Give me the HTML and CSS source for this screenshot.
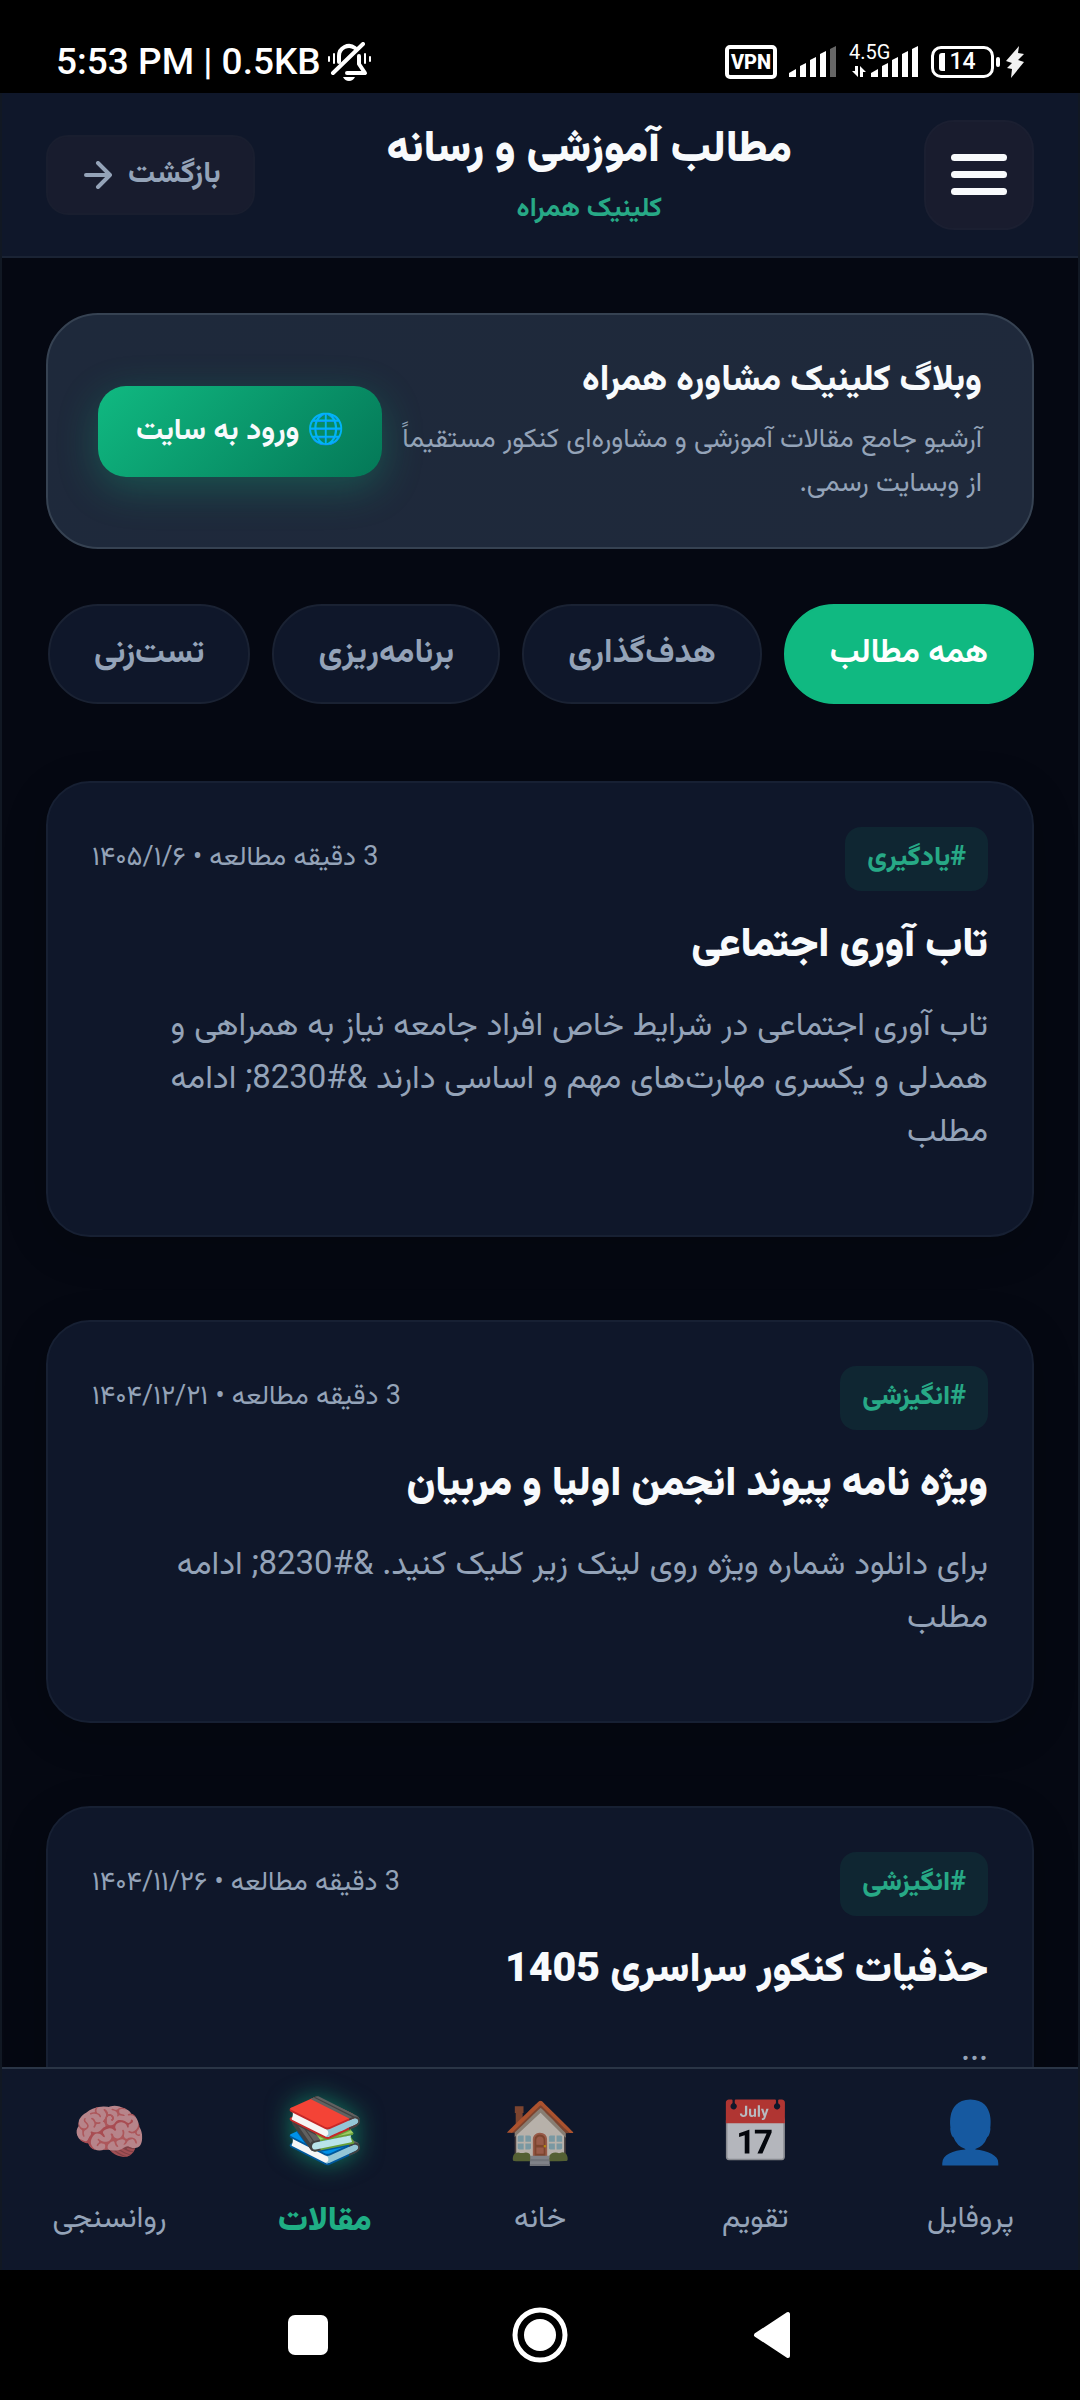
FILE: index.html
```
<!DOCTYPE html>
<html lang="fa" dir="rtl">
<head>
    <meta charset="UTF-8">
    <meta name="viewport" content="width=device-width, initial-scale=1.0">
    <title>مطالب آموزشی و رسانه</title>

    <link rel="stylesheet" href="styles.css">
</head>
<body>

    <div class="status" dir="ltr">
        <div class="status_left">
            <span class="status_time">5:53 PM | 0.5KB</span>
            <svg viewBox="0 0 44 40" width="44" height="40" fill="none" stroke="#fff" stroke-width="4" stroke-linecap="round">
                <path d="M12 20V14a10 10 0 0 1 16-8"/>
                <path d="M32 14v8l6 9H20" stroke-linejoin="round"/>
                <path d="M6 31 36 2"/>
                <path d="M2 15v4M7 12v9M38 12v9M43 15v4" stroke-width="2"/>
                <path d="M16 35h12q-2 4-6 4t-6-4z" fill="#fff" stroke="none"/>
            </svg>
        </div>
        <div class="status_right">
            <span class="vpn">VPN</span>
            <svg viewBox="0 0 48 32" width="48" height="32" fill="#fff">
                <path d="M0 31v-4l7-4v8z"/>
                <path d="M11 31V20l6-3v14z"/>
                <path d="M21 31V14l6-3v20z"/>
                <path d="M31 31V8l6-3v26z"/>
                <path d="M41 31V3l6-3v31z" fill="#666"/>
            </svg>
            <div class="cell">
                <span class="cell_label">4.5G</span>
                <svg viewBox="0 0 70 32" width="70" height="32" fill="#fff">
                    <path d="M9 20v11L3 25h3v-5zM11 31V20l6 6h-3v5z"/>
                    <path d="M22 31v-4l7-4v8z"/>
                    <path d="M33 31V20l6-3v14z"/>
                    <path d="M43 31V14l6-3v20z"/>
                    <path d="M53 31V8l6-3v26z"/>
                    <path d="M63 31V3l6-3v31z"/>
                </svg>
            </div>
            <div class="battery"><span>14</span></div>
            <svg viewBox="0 0 18 32" width="18" height="32" fill="#f1f1f1">
                <path d="M13 0 0 15l6 2-5 5 5 1-1 9L18 16l-6-2 6-6-6-1z"/>
            </svg>
        </div>
    </div>

    <div class="app">
        <header class="header">
            <button class="menu" type="button" aria-label="منو">
                <span></span>
                <span></span>
                <span></span>
            </button>
            <div class="header_title">
                <h1>مطالب آموزشی و رسانه</h1>
                <p>کلینیک همراه</p>
            </div>
            <button class="back" type="button">
                بازگشت
                <svg viewBox="0 0 28 28" width="28" height="28" fill="none" stroke="currentColor" stroke-width="4" stroke-linecap="round" stroke-linejoin="round">
                    <path d="M2 14h24M14 2l12 12-12 12"/>
                </svg>
            </button>
        </header>

        <main class="content">
            <section class="banner">
                <div class="banner_text">
                    <h2>وبلاگ کلینیک مشاوره همراه</h2>
                    <p>آرشیو جامع مقالات آموزشی و مشاوره‌ای کنکور مستقیماً از وبسایت رسمی.</p>
                </div>
                <a class="banner_link" href="#">🌐 ورود به سایت</a>
            </section>

            <div class="tabs">
                <button class="tab active" type="button">همه مطالب</button>
                <button class="tab" type="button">هدف‌گذاری</button>
                <button class="tab" type="button">برنامه‌ریزی</button>
                <button class="tab" type="button">تست‌زنی</button>
            </div>

            <article class="card">
                <div class="card_head">
                    <span class="tag">#یادگیری</span>
                    <span class="meta">3 دقیقه مطالعه • ۱۴۰۵/۱/۶</span>
                </div>
                <h3>تاب آوری اجتماعی</h3>
                <p>تاب آوری اجتماعی در شرایط خاص افراد جامعه نیاز به همراهی و همدلی و یکسری مهارت‌های مهم و اساسی دارند &amp;#8230; ادامه مطلب</p>
            </article>

            <article class="card">
                <div class="card_head">
                    <span class="tag">#انگیزشی</span>
                    <span class="meta">3 دقیقه مطالعه • ۱۴۰۴/۱۲/۲۱</span>
                </div>
                <h3>ویژه نامه پیوند انجمن اولیا و مربیان</h3>
                <p>برای دانلود شماره ویژه روی لینک زیر کلیک کنید. &amp;#8230; ادامه مطلب</p>
            </article>

            <article class="card">
                <div class="card_head">
                    <span class="tag">#انگیزشی</span>
                    <span class="meta">3 دقیقه مطالعه • ۱۴۰۴/۱۱/۲۶</span>
                </div>
                <h3>حذفیات کنکور سراسری 1405</h3>
                <p>...</p>
            </article>
        </main>

        <nav class="bottom_nav">
            <a class="nav_item" href="#"><span class="nav_icon">👤</span>پروفایل</a>
            <a class="nav_item" href="#"><span class="nav_icon">📅</span>تقویم</a>
            <a class="nav_item" href="#"><span class="nav_icon">🏠</span>خانه</a>
            <a class="nav_item active" href="#"><span class="nav_icon">📚</span>مقالات</a>
            <a class="nav_item" href="#"><span class="nav_icon">🧠</span>روانسنجی</a>
        </nav>
    </div>

    <div class="system_nav" dir="ltr">
        <button type="button" aria-label="Recent apps">
            <svg viewBox="0 0 56 56" width="56" height="56"><rect x="8" y="8" width="40" height="40" rx="7" fill="#fff"/></svg>
        </button>
        <button type="button" aria-label="Home">
            <svg viewBox="0 0 56 56" width="56" height="56"><circle cx="28" cy="28" r="25" fill="none" stroke="#fff" stroke-width="5"/><circle cx="28" cy="28" r="16" fill="#fff"/></svg>
        </button>
        <button type="button" aria-label="Back">
            <svg viewBox="0 0 56 56" width="56" height="56"><path d="M12 28 44 7v42z" fill="#fff" stroke="#fff" stroke-width="4" stroke-linejoin="round"/></svg>
        </button>
    </div>

</body>
</html>
```
FILE: styles.css
```
*,*::after,*::before{
    box-sizing: border-box;
    margin: 0;
    padding: 0;
}

body{
    display: flex;
    flex-direction: column;
    height: 100vh;
    background-color: #000;
    color: #f8fafc;
    font-family: Vazirmatn, Roboto, "DejaVu Sans", sans-serif;
    font-size: 30px;
}

button{
    border: none;
    background: none;
    color: inherit;
    font: inherit;
}

a{
    color: inherit;
    text-decoration: none;
}

svg{
    display: block;
    flex: none;
}

/* phone status bar */

.status{
    display: flex;
    justify-content: space-between;
    align-items: flex-end;
    height: 93px;
    padding: 0 56px 11px;
    font-family: Roboto, sans-serif;
    color: #fff;
}

.status_left,
.status_right{
    display: flex;
    align-items: center;
    height: 40px;
}

.status_left{
    gap: 6px;
}

.status_right{
    gap: 12px;
}

.status_time{
    font-size: 37px;
    font-weight: 500;
    line-height: 40px;
}

.vpn{
    width: 52px;
    border: 4px solid #fff;
    border-radius: 5px;
    font-size: 20px;
    font-weight: 800;
    line-height: 26px;
    text-align: center;
}

.cell{
    position: relative;
}

.cell_label{
    position: absolute;
    top: -4px;
    left: 0;
    font-size: 20px;
    line-height: 20px;
}

.battery{
    position: relative;
    width: 63px;
    border: 3px solid #fff;
    border-radius: 10px;
    font-size: 23px;
    font-weight: 500;
    line-height: 26px;
    text-align: center;
}

.battery::before{
    content: "";
    position: absolute;
    top: 4px;
    left: 5px;
    width: 6px;
    height: 18px;
    border-radius: 3px 0 0 3px;
    background-color: #fff;
}

.battery::after{
    content: "";
    position: absolute;
    top: 8px;
    right: -9px;
    width: 4px;
    height: 10px;
    border-radius: 2px;
    background-color: #fff;
}

/* app */

.app{
    display: flex;
    flex-direction: column;
    flex: 1;
    min-height: 0;
    border: solid #111823;
    border-width: 0 2px;
    background-color: #050812;
}

.header{
    display: flex;
    justify-content: space-between;
    align-items: center;
    height: 165px;
    padding: 0 44px;
    border-bottom: 2px solid #1a2334;
    background-color: #0f172a;
}

.menu{
    display: flex;
    flex-direction: column;
    justify-content: center;
    align-items: center;
    gap: 10px;
    width: 110px;
    height: 110px;
    border: 2px solid #1b1f31;
    border-radius: 30px;
    background-color: #191c2e;
}

.menu span{
    width: 56px;
    height: 7px;
    border-radius: 4px;
    background-color: #f8fafc;
}

.header_title{
    text-align: center;
}

.header_title h1{
    font-size: 44px;
    font-weight: 900;
    line-height: 66px;
    margin-bottom: 4px;
}

.header_title p{
    color: #27a986;
    font-size: 27px;
    font-weight: 700;
    line-height: 44px;
}

.back{
    display: flex;
    align-items: center;
    gap: 16px;
    height: 80px;
    padding: 0 32px 0 36px;
    border: 2px solid #191e2f;
    border-radius: 22px;
    background-color: #181c2e;
    color: #94a3b8;
    font-weight: 700;
}

.content{
    flex: 1;
    min-height: 0;
    padding: 55px 44px 0;
    overflow: hidden;
}

.banner{
    display: flex;
    align-items: center;
    padding: 40px 50px;
    border: 2px solid #364252;
    border-radius: 52px;
    background: linear-gradient(135deg, #1e293b, #1f293b);
}

.banner_text{
    flex: 1;
}

.banner_text h2{
    font-size: 36px;
    font-weight: 800;
    line-height: 52px;
    margin-bottom: 12px;
}

.banner_text p{
    color: #94a3b8;
    font-size: 27px;
    line-height: 44px;
}

.banner_link{
    padding: 22px 38px;
    border-radius: 28px;
    background: linear-gradient(135deg, #10b981, #047857);
    box-shadow: 0 11px 40px rgba(16, 185, 129, 0.3);
    font-weight: 700;
    line-height: 47px;
    white-space: nowrap;
}

.tabs{
    display: flex;
    gap: 22px;
    margin: 55px 0 77px;
}

.tab{
    height: 100px;
    padding: 0 44px;
    border: 2px solid #1a2233;
    border-radius: 50px;
    background-color: #0f172a;
    color: #94a3b8;
    font-size: 33px;
    font-weight: 700;
    white-space: nowrap;
}

.tab.active{
    border-color: #10b981;
    background-color: #10b981;
    color: #fff;
}

.card{
    margin-bottom: 83px;
    padding: 44px 44px 75px;
    border: 2px solid #172033;
    border-radius: 44px;
    background-color: #0f172a;
    box-shadow: 0 11px 44px rgba(0, 0, 0, 0.2);
}

.card_head{
    display: flex;
    justify-content: space-between;
    align-items: center;
    margin-bottom: 22px;
}

.tag{
    padding: 10px 22px;
    border-radius: 16px;
    background-color: #0f2632;
    color: #27a986;
    font-size: 27px;
    font-weight: 800;
    line-height: 44px;
}

.meta{
    color: #94a3b8;
    font-size: 27px;
    line-height: 44px;
}

.card h3{
    font-size: 41px;
    font-weight: 900;
    line-height: 66px;
    margin-bottom: 22px;
}

.card p{
    color: #94a3b8;
    font-size: 33px;
    line-height: 53px;
}

.bottom_nav{
    display: grid;
    grid-template-columns: repeat(5, 1fr);
    height: 203px;
    border-top: 2px solid #2a3546;
    background-color: #0f172a;
}

.nav_item{
    display: flex;
    flex-direction: column;
    justify-content: center;
    align-items: center;
    gap: 20px;
    padding-top: 4px;
    color: #94a3b8;
    line-height: 48px;
}

.nav_icon{
    font-size: 60px;
    line-height: 76px;
    opacity: 0.7;
}

.nav_item.active{
    gap: 24px;
    color: #1fae84;
    font-size: 33px;
    font-weight: 900;
}

.active .nav_icon{
    font-size: 64px;
    opacity: 1;
    filter: drop-shadow(0 0 12px rgba(16, 185, 129, 0.6));
}

/* phone navigation keys */

.system_nav{
    display: flex;
    justify-content: center;
    align-items: center;
    gap: 176px;
    height: 130px;
}
```
